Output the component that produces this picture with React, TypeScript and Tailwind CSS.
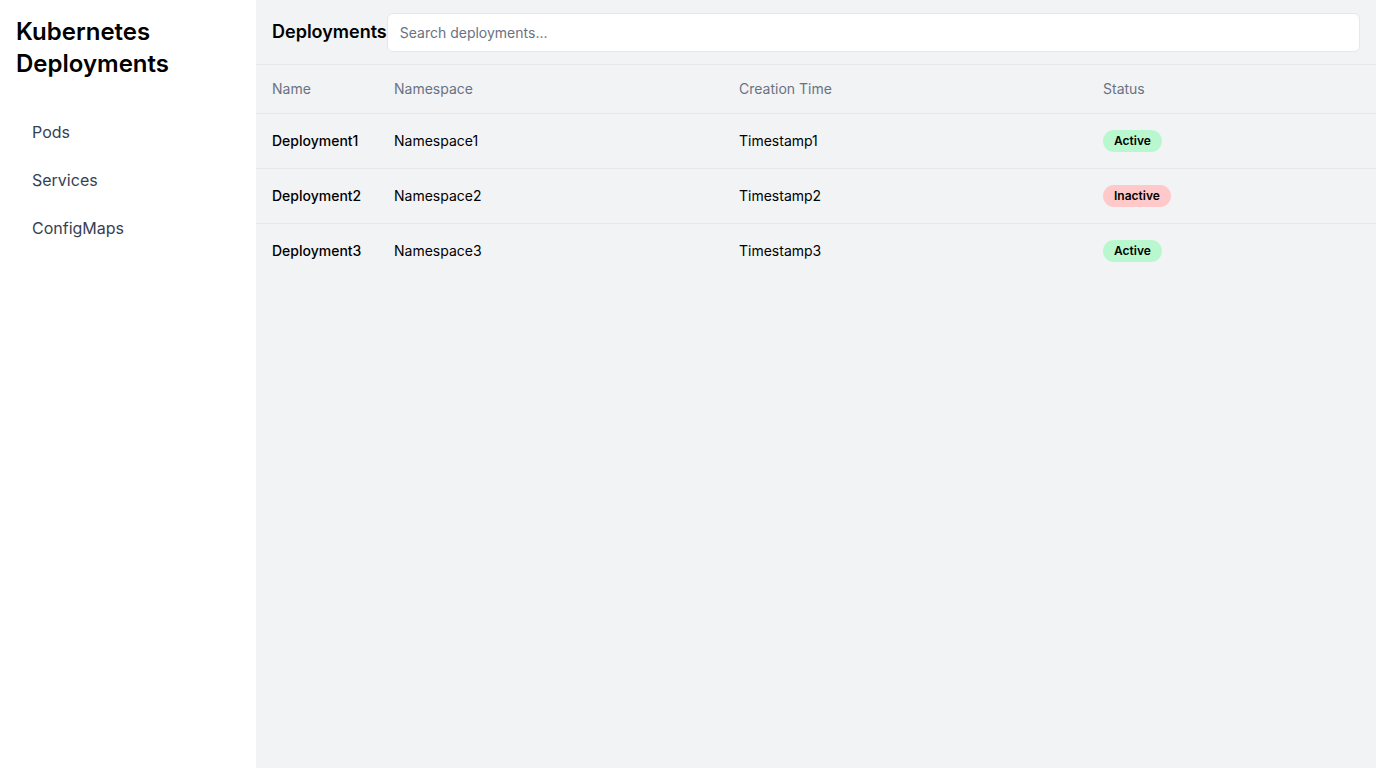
import React, { useState } from 'react';

type Deployment = {
  name: string;
  namespace: string;
  created: string;
  status: 'Active' | 'Inactive';
};

const deployments: Deployment[] = [
  { name: 'Deployment1', namespace: 'Namespace1', created: 'Timestamp1', status: 'Active' },
  { name: 'Deployment2', namespace: 'Namespace2', created: 'Timestamp2', status: 'Inactive' },
  { name: 'Deployment3', namespace: 'Namespace3', created: 'Timestamp3', status: 'Active' },
];

const navItems = ['Pods', 'Services', 'ConfigMaps'];

const cols = 'grid grid-cols-[122px_345px_364px_1fr]';

export default function App() {
  const [query, setQuery] = useState('');

  const rows = deployments.filter((d) =>
    d.name.toLowerCase().includes(query.toLowerCase())
  );

  return (
    <div className="flex h-screen w-full font-['Inter',sans-serif] text-black">
      {/* Sidebar */}
      <aside className="w-64 shrink-0 bg-white p-4">
        <h1 className="text-2xl font-semibold leading-8">Kubernetes Deployments</h1>
        <nav className="mt-7 flex flex-col">
          {navItems.map((item) => (
            <a key={item} href="#" className="px-4 py-3 text-base leading-6 text-gray-700">
              {item}
            </a>
          ))}
        </nav>
      </aside>

      {/* Main */}
      <main className="flex flex-1 flex-col bg-[#f2f3f5]">
        <header className="flex h-[65px] items-center border-b border-gray-200 pl-4 pr-4">
          <h2 className="text-lg font-semibold">Deployments</h2>
          <input
            value={query}
            onChange={(e) => setQuery(e.target.value)}
            placeholder="Search deployments..."
            className="h-[39px] flex-1 rounded-md border border-gray-200 bg-white px-3 text-sm text-gray-800 placeholder:text-gray-500 outline-none"
          />
        </header>

        <div className="text-sm">
          <div className={`${cols} h-[49px] items-center border-b border-gray-200 text-gray-500`}>
            <div className="pl-4">Name</div>
            <div className="pl-4">Namespace</div>
            <div className="pl-4">Creation Time</div>
            <div className="pl-4">Status</div>
          </div>
          <div className="divide-y divide-gray-200">
            {rows.map((d) => (
              <div key={d.name} className={`${cols} items-center py-4`}>
                <div className="pl-4 font-medium">{d.name}</div>
                <div className="pl-4">{d.namespace}</div>
                <div className="pl-4">{d.created}</div>
                <div className="pl-4">
                  <span
                    className={`inline-block rounded-full px-[11px] py-[3px] text-xs font-semibold leading-4 ${
                      d.status === 'Active' ? 'bg-green-200' : 'bg-red-200'
                    }`}
                  >
                    {d.status}
                  </span>
                </div>
              </div>
            ))}
          </div>
        </div>
      </main>
    </div>
  );
}
